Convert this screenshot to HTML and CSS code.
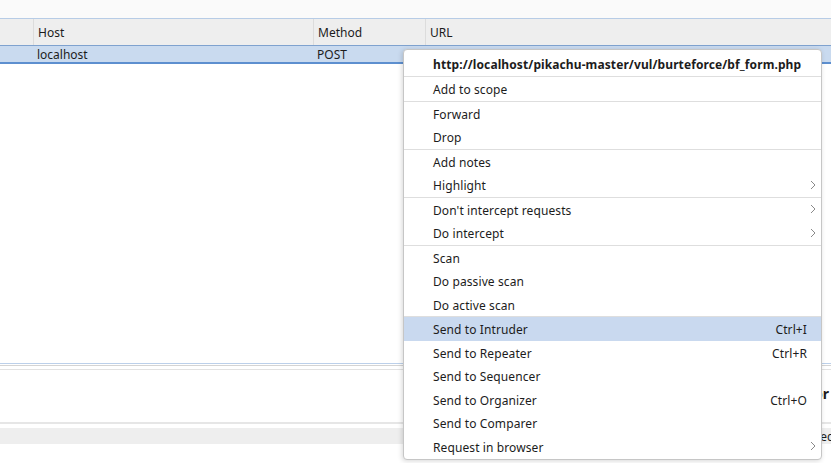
FILE: index.html
```html
<!DOCTYPE html>
<html lang="en">
<head>
  <meta charset="UTF-8">
  <title>Proxy history</title>
  <link rel="stylesheet" href="styles.css">
</head>
<body>
  <div class="page">
    <div class="topbar"></div>
    <div class="table">
      <div class="row head">
        <div class="cell"></div>
        <div class="cell">Host</div>
        <div class="cell">Method</div>
        <div class="cell">URL</div>
      </div>
      <div class="row selected">
        <div class="cell"></div>
        <div class="cell">localhost</div>
        <div class="cell">POST</div>
        <div class="cell"></div>
      </div>
    </div>
    <div class="lower">
      <div class="panel">
        <div class="panel-title">Inspector</div>
      </div>
      <div class="band"><span class="band-text">Select</span></div>
    </div>
  </div>

  <div class="menu">
    <div class="item url">http://localhost/pikachu-master/vul/burteforce/bf_form.php</div>
    <div class="group">
      <div class="item">Add to scope</div>
    </div>
    <div class="group">
      <div class="item">Forward</div>
      <div class="item">Drop</div>
    </div>
    <div class="group">
      <div class="item">Add notes</div>
      <div class="item sub">Highlight<svg class="arrow" viewBox="0 0 6 10"><polyline points="1,1 5,5 1,9"/></svg></div>
    </div>
    <div class="group">
      <div class="item sub">Don't intercept requests<svg class="arrow" viewBox="0 0 6 10"><polyline points="1,1 5,5 1,9"/></svg></div>
      <div class="item sub">Do intercept<svg class="arrow" viewBox="0 0 6 10"><polyline points="1,1 5,5 1,9"/></svg></div>
    </div>
    <div class="group">
      <div class="item">Scan</div>
      <div class="item">Do passive scan</div>
      <div class="item">Do active scan</div>
    </div>
    <div class="group">
      <div class="item active">Send to Intruder<span class="key">Ctrl+I</span></div>
      <div class="item">Send to Repeater<span class="key">Ctrl+R</span></div>
      <div class="item">Send to Sequencer</div>
      <div class="item">Send to Organizer<span class="key">Ctrl+O</span></div>
      <div class="item">Send to Comparer</div>
      <div class="item sub">Request in browser<svg class="arrow" viewBox="0 0 6 10"><polyline points="1,1 5,5 1,9"/></svg></div>
    </div>
  </div>
</body>
</html>
```

FILE: styles.css
```css
* { box-sizing: border-box; }
html, body { margin: 0; height: 100%; overflow: hidden; }
body {
  font-family: "Noto Sans", "Open Sans", sans-serif;
  font-size: 12px;
  color: #1c1c1c;
  background: #fff;
}
.page { display: flex; flex-direction: column; height: 463px; }
.topbar {
  height: 19px;
  background: #fafafa;
  border-bottom: 1px solid #b7cce6;
}
.table { flex: 1; display: flex; flex-direction: column; }
.row {
  display: grid;
  grid-template-columns: 33px 280px 112px 1fr;
}
.head { height: 26px; background: #eeeeee; }
.head .cell { border-left: 1px solid #dcdcdc; }
.head .cell:first-child { border-left: none; }
.cell {
  padding-left: 4px;
  display: flex;
  align-items: center;
  white-space: nowrap;
}
.selected {
  height: 19px;
  background: #c9daef;
  border-top: 1px solid #7fa2cf;
  border-bottom: 2px solid #5d8fcf;
  line-height: 14px;
}
.selected .cell { padding-top: 2px; }
.lower {
  height: 100px;
  display: flex;
  flex-direction: column;
  border-top: 1px solid #bcd0ea;
}
.panel {
  height: 59px;
  margin-top: 1px;
  border-top: 1px solid #d4d4d4;
  border-bottom: 2px solid #e6e6e6;
  padding-top: 3px;
}
.panel::before {
  content: "";
  display: block;
  height: 1px;
  background: #e2e2e2;
}
.panel-title {
  text-align: right;
  font-weight: bold;
  font-size: 14px;
  margin-top: 14px;
  margin-right: 2px;
}
.band {
  margin-top: 4px;
  height: 16px;
  background: #eeeeee;
  display: flex;
  justify-content: flex-end;
  align-items: center;
  overflow: hidden;
}
.band-text { white-space: nowrap; margin-right: -6px; }

.menu {
  position: absolute;
  left: 403px;
  top: 49px;
  width: 419px;
  background: #fff;
  border: 1px solid #c6c6c6;
  border-radius: 4px;
  box-shadow: -1px 1px 5px rgba(0, 0, 0, 0.16);
  padding-bottom: 1px;
  letter-spacing: 0.1px;
}
.group { border-top: 1px solid #dedede; }
.item {
  height: 23.5px;
  display: flex;
  align-items: center;
  padding-left: 29px;
  padding-right: 14px;
  padding-top: 2px;
  white-space: nowrap;
}
.item.url { height: 26px; font-weight: bold; }
.item.active { background: #c9d9ef; }
.key { margin-left: auto; }
.item.sub { padding-right: 5px; }
.arrow {
  margin-left: auto;
  width: 6px;
  height: 10px;
  margin-top: -2px;
  fill: none;
  stroke: #8a8a8a;
  stroke-width: 1;
}
```
